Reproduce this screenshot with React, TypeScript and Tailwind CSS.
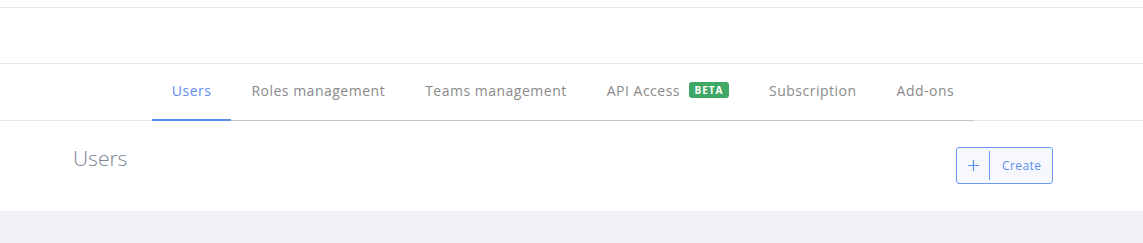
const tabs = [
  { label: "Users", active: true },
  { label: "Roles management" },
  { label: "Teams management" },
  { label: "API Access", beta: true },
  { label: "Subscription" },
  { label: "Add-ons" },
];

function PlusIcon() {
  return (
    <svg width="11" height="11" viewBox="0 0 11 11" fill="none" stroke="currentColor" strokeWidth="1.2">
      <path d="M5.5 0v11M0 5.5h11" />
    </svg>
  );
}

export default function App() {
  return (
    <div className="h-[243px] w-[1143px] overflow-hidden bg-white font-['Open_Sans',sans-serif]">
      <div className="h-[8px] border-b border-[#e6e6e8]" />
      <div className="h-[56px] border-b border-[#e6e6e8]" />

      <nav className="border-b border-[#e6e6e8]">
        <div className="ml-[73px] flex w-[980px] justify-center">
          <ul className="-mb-px flex border-b border-[#c4c6d0]">
            {tabs.map((t) => (
              <li
                key={t.label}
                className={`relative flex h-[56px] items-center px-5 pb-1 text-[14px] tracking-[0.5px] ${
                  t.active ? "text-[#5b8def]" : "text-[#8a8a8a]"
                }`}
              >
                {t.label}
                {t.beta && (
                  <span className="ml-[9px] inline-flex h-[16px] w-[40px] items-center justify-center rounded-[3px] bg-[#3fa866] text-[10px] font-bold tracking-[1px] text-white">
                    BETA
                  </span>
                )}
                {t.active && <span className="absolute bottom-[-1px] left-0 right-0 h-[2px] bg-[#5b8def]" />}
              </li>
            ))}
          </ul>
        </div>
      </nav>

      <div className="ml-[73px] flex h-[90px] w-[980px] items-start justify-between pt-[23px]">
        <h1 className="text-[21px] font-light leading-[28px] text-[#7b8194]">Users</h1>
        <button
          type="button"
          className="mt-[3px] flex h-[37px] w-[97px] items-center rounded-[3px] border border-[#6c9bf5] bg-[#f6f8fe] text-[#5b8def]"
        >
          <span className="flex w-[32px] justify-center">
            <PlusIcon />
          </span>
          <span className="h-[29px] w-px bg-[#6c9bf5]" />
          <span className="pl-[12px] text-[12px] font-medium tracking-[0.4px]">Create</span>
        </button>
      </div>

      <div className="h-[32px] bg-[#f0f1f6]" />
    </div>
  );
}
